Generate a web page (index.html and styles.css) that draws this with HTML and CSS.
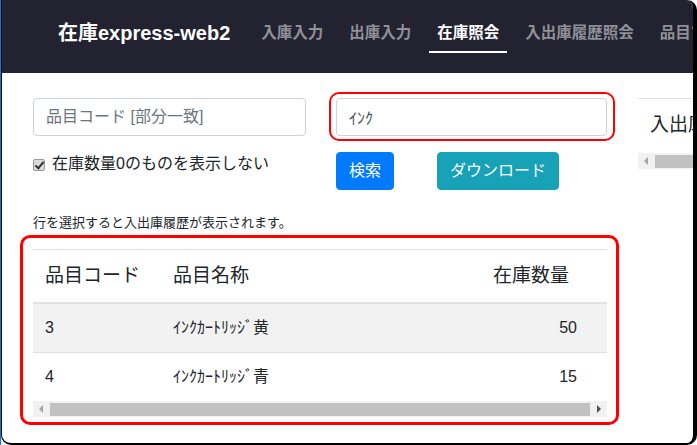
FILE: index.html
```html
<!DOCTYPE html>
<html lang="ja">
<head>
<meta charset="utf-8">
<title>在庫照会</title>
<link rel="stylesheet" href="styles.css">
</head>
<body>
<div class="frame">
  <header class="navbar">
    <span class="brand">在庫express-web2</span>
    <nav class="nav">
      <a class="nav-link" href="#">入庫入力</a>
      <a class="nav-link" href="#">出庫入力</a>
      <a class="nav-link active" href="#">在庫照会</a>
      <a class="nav-link" href="#">入出庫履歴照会</a>
      <a class="nav-link" href="#">品目マスタ</a>
    </nav>
  </header>
  <main class="main">
    <section class="left">
      <div class="form-grid">
        <input class="form-control" type="text" placeholder="品目コード [部分一致]">
        <div class="annot annot-input">
          <input class="form-control" type="text" value="ｲﾝｸ">
        </div>
        <label class="check"><input class="check-input" type="checkbox" checked><span>在庫数量0のものを表示しない</span></label>
        <div class="buttons">
          <button class="btn btn-primary" type="button">検索</button>
          <button class="btn btn-info" type="button">ダウンロード</button>
        </div>
      </div>
      <p class="hint">行を選択すると入出庫履歴が表示されます。</p>
      <div class="annot annot-table">
        <div class="table-wrap">
          <table class="table stock">
            <colgroup><col class="c1"><col class="c2"><col class="c3"><col class="c4"></colgroup>
            <thead>
              <tr><th>品目コード</th><th>品目名称</th><th>在庫数量</th><th></th></tr>
            </thead>
            <tbody>
              <tr><td>3</td><td>ｲﾝｸｶｰﾄﾘｯｼﾞ黄</td><td class="num">50</td><td></td></tr>
              <tr><td>4</td><td>ｲﾝｸｶｰﾄﾘｯｼﾞ青</td><td class="num">15</td><td></td></tr>
            </tbody>
          </table>
        </div>
        <div class="scrollbar" aria-hidden="true">
          <span class="sb-btn sb-left"></span>
          <span class="sb-thumb"></span>
          <span class="sb-btn sb-right"></span>
        </div>
      </div>
    </section>
    <section class="right">
      <div class="table-wrap wrap-right">
        <table class="table history">
          <thead>
            <tr><th>入出庫日</th><th>区分</th><th>数量</th><th>備考</th></tr>
          </thead>
        </table>
      </div>
      <div class="scrollbar" aria-hidden="true">
        <span class="sb-btn sb-left"></span>
        <span class="sb-thumb"></span>
      </div>
    </section>
  </main>
</div>
</body>
</html>
```
FILE: styles.css
```css
* { box-sizing: border-box; }
html, body { margin: 0; padding: 0; }
body {
  background: #fff;
  border-left: 1px solid #1f6fd0;
  font-family: "Liberation Sans", "Noto Sans CJK JP", sans-serif;
  color: #212529;
  width: 697px;
  height: 445px;
  overflow: hidden;
}
.frame {
  width: 696px;
  height: 445px;
  border-style: solid;
  border-color: #000;
  border-width: 0 4px 2px 1px;
  border-radius: 0 10px 10px 10px;
  overflow: hidden;
  background: #fff;
}
.navbar {
  height: 73px;
  background: #222230;
  display: flex;
  align-items: flex-start;
  padding: 21px 0 0 56px;
  white-space: nowrap;
}
.brand {
  color: #fff;
  font-weight: bold;
  font-size: 20px;
  line-height: 24px;
  margin-right: 23px;
}
.nav { display: flex; gap: 10px; }
.nav-link {
  color: rgba(255,255,255,.5);
  font-weight: bold;
  font-size: 15.5px;
  line-height: 24px;
  text-decoration: none;
  padding: 0 8px 6px;
  border-bottom: 2px solid transparent;
}
.nav-link.active { color: #fff; border-bottom-color: #fff; }

.main {
  display: flex;
  gap: 31px;
  padding: 25px 0 0 31px;
}
.left { width: 574px; flex: none; }
.right { width: 320px; flex: none; }

.form-grid {
  display: grid;
  grid-template-columns: 273px 271px;
  column-gap: 30px;
  row-gap: 16px;
}
.form-control {
  display: block;
  width: 100%;
  height: 38px;
  padding: 6px 12px;
  font-family: inherit;
  font-size: 16px;
  line-height: 24px;
  color: #495057;
  background: #fff;
  border: 1px solid #ced4da;
  border-radius: 4px;
}
.form-control::placeholder { color: #6c757d; }

.annot { position: relative; }
.annot::after {
  content: "";
  position: absolute;
  border: 2.5px solid #f00;
  border-radius: 10px;
  pointer-events: none;
}
.annot-input::after { top: -6px; bottom: -5px; left: -7px; right: -8px; }
.annot-table { margin-top: 16px; }
.annot-table::after { top: -14px; bottom: -8px; left: -13px; right: -12px; border-width: 3px; }

.check {
  display: flex;
  align-items: center;
  font-size: 16px;
  line-height: 24px;
  height: 24px;
}
.check-input {
  appearance: none;
  -webkit-appearance: none;
  width: 12px;
  height: 12px;
  margin: 1px 7px 0 0;
  border: 1px solid #9a9a9a;
  border-radius: 2px;
  background: #dcdcdc;
  position: relative;
  flex: none;
}
.check-input::after {
  content: "";
  position: absolute;
  left: 3px;
  top: 0px;
  width: 3px;
  height: 7px;
  border: solid #333;
  border-width: 0 2px 2px 0;
  transform: rotate(40deg);
}

.buttons { display: flex; gap: 43px; }
.btn {
  height: 38px;
  padding: 6px 12px;
  font-family: inherit;
  font-size: 16px;
  line-height: 24px;
  color: #fff;
  border: 1px solid transparent;
  border-radius: 4px;
}
.btn-primary { background: #007bff; border-color: #007bff; }
.btn-info { background: #17a2b8; border-color: #17a2b8; }

.hint {
  margin: 23px 0 0;
  font-size: 13px;
  line-height: 20px;
}

.table-wrap {
  width: 100%;
  overflow: hidden;
}

.scrollbar {
  display: flex;
  height: 16px;
  background: #f1f1f1;
}
.sb-btn {
  flex: none;
  width: 17px;
  position: relative;
}
.sb-btn::after {
  content: "";
  position: absolute;
  top: 4px;
  border-top: 4px solid transparent;
  border-bottom: 4px solid transparent;
}
.sb-left::after { left: 6px; border-right: 4px solid #a3a3a3; }
.sb-right::after { left: 7px; border-left: 4px solid #505050; }
.sb-thumb {
  flex: 1;
  margin: 2px 0 1px;
  background: #c1c1c1;
}

.table {
  border-collapse: collapse;
  table-layout: fixed;
}
.table th, .table td {
  padding: 12px;
  text-align: left;
  white-space: nowrap;
  vertical-align: top;
}
.table th {
  font-weight: normal;
  font-size: 19px;
  line-height: 28px;
  border-top: 1px solid #dee2e6;
  border-bottom: 2px solid #dee2e6;
}
.table td {
  font-size: 16px;
  line-height: 24px;
  border-top: 1px solid #dee2e6;
}
.table tbody tr:nth-child(odd) { background: #f2f2f2; }
.table td.num { text-align: right; }

.stock { width: 580px; }
.stock .c1 { width: 128px; }
.stock .c2 { width: 320px; }
.stock .c3 { width: 108px; }
.stock .c4 { width: 24px; }

.wrap-right { width: 320px; }
.history { width: 640px; }
.history th { border-bottom-color: transparent; }
```
